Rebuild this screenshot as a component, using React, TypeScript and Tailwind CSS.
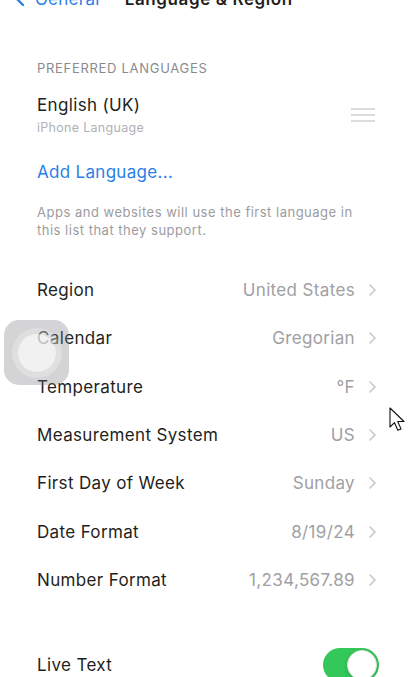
import { ChevronLeft } from 'lucide-react';

const ROWS = [
  { label: 'Region', value: 'United States' },
  { label: 'Calendar', value: 'Gregorian' },
  { label: 'Temperature', value: '°F' },
  { label: 'Measurement System', value: 'US' },
  { label: 'First Day of Week', value: 'Sunday' },
  { label: 'Date Format', value: '8/19/24' },
  { label: 'Number Format', value: '1,234,567.89' },
];

function Chevron() {
  return (
    <svg width="7" height="12" viewBox="0 0 7 12" className="ml-[14px] shrink-0">
      <path d="M1 1l5 5-5 5" fill="none" stroke="#c7c7cc" strokeWidth="1.6" strokeLinecap="round" strokeLinejoin="round" />
    </svg>
  );
}

function DragHandle() {
  return (
    <div className="flex w-[24px] flex-col gap-[4.5px] mr-[1px]">
      <div className="h-[1.5px] bg-[#dcdcde]" />
      <div className="h-[1.5px] bg-[#dcdcde]" />
      <div className="h-[1.5px] bg-[#dcdcde]" />
    </div>
  );
}

export default function App() {
  return (
    <div className="relative h-[677px] w-[415px] overflow-hidden bg-white font-['Inter',sans-serif] text-[#1f1f21]">
      {/* nav bar, scrolled partly off the top */}
      <div className="-mt-[12px] flex h-[22px] items-center text-[17px] leading-[22px]">
        <div className="ml-[8px] flex items-center text-[#2b7fe6]">
          <ChevronLeft size={24} strokeWidth={2.4} />
          <span className="ml-[3px] tracking-[0.3px]">General</span>
        </div>
        <span className="ml-[25px] font-semibold tracking-[0.6px]">Language &amp; Region</span>
      </div>

      <div className="pl-[37px] pr-[39px]">
        <div className="mt-[50px] text-[13px] leading-[16px] tracking-[0.7px] text-[#8a8a8e]">PREFERRED LANGUAGES</div>

        <div className="mt-[18px] flex items-center justify-between">
          <div>
            <div className="text-[17px] leading-[22px] tracking-[0.35px]">English (UK)</div>
            <div className="mt-[3.5px] text-[12.5px] leading-[16px] tracking-[0.3px] text-[#b0b0b4]">iPhone Language</div>
          </div>
          <DragHandle />
        </div>

        <div className="mt-[25.5px] text-[17px] leading-[22px] tracking-[0.3px] text-[#2b7fe6]">Add Language...</div>

        <p className="mt-[20px] text-[13px] leading-[18px] tracking-[0.5px] text-[#9c9ca0]">
          Apps and websites will use the first language in
          <br />
          this list that they support.
        </p>

        <div className="mt-[27px]">
          {ROWS.map((r) => (
            <div key={r.label} className="flex h-[48.3px] items-center justify-between text-[17px] leading-[22px] tracking-[0.35px]">
              <span>{r.label}</span>
              <div className="flex items-center">
                <span className="text-[#a0a0a4]">{r.value}</span>
                <Chevron />
              </div>
            </div>
          ))}
        </div>

        <div className="mt-[37px] flex h-[48.3px] items-center justify-between text-[17px] leading-[22px] tracking-[0.35px]">
          <span>Live Text</span>
          <div className="flex h-[34px] w-[56px] items-center justify-end rounded-full bg-[#34c759] p-[2px] -mr-[3px]">
            <div className="h-[30px] w-[30px] rounded-full border border-[#e4e4e4] bg-white shadow-[0_2px_4px_rgba(0,0,0,0.15)]" />
          </div>
        </div>
      </div>

      {/* assistive touch button */}
      <div className="absolute left-[4px] top-[320px] flex h-[65px] w-[65px] items-center justify-center rounded-[15px] bg-[rgba(120,120,128,0.32)]">
        <div className="flex h-[50px] w-[50px] items-center justify-center rounded-full bg-[rgba(255,255,255,0.25)]">
          <div className="h-[38px] w-[38px] rounded-full bg-[rgba(255,255,255,0.55)]" />
        </div>
      </div>

      {/* mouse cursor */}
      <svg className="absolute left-[389px] top-[407px]" width="16" height="26" viewBox="0 0 16 26">
        <path d="M1 1v19l4.5-4.3 3.3 7.6 3.2-1.4-3.3-7.4H15z" fill="white" stroke="#111" strokeWidth="1.1" strokeLinejoin="round" />
      </svg>
    </div>
  );
}
